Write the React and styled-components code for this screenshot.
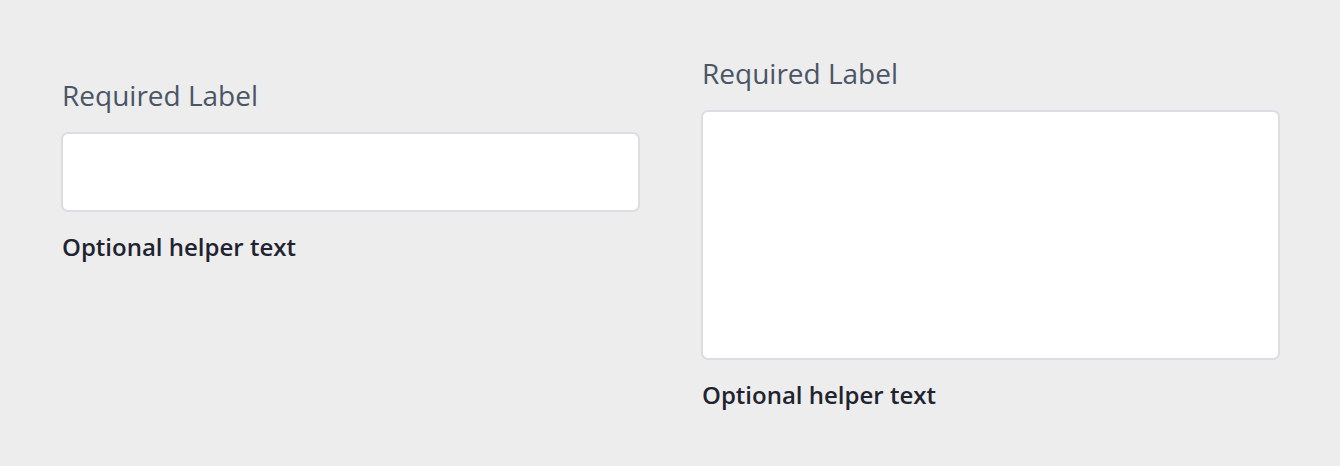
import React from "react";
import styled, { createGlobalStyle } from "styled-components";

const Global = createGlobalStyle`
  html, body { margin: 0; padding: 0; background: #ededed; }
  body { font-family: "Open Sans", "Noto Sans", sans-serif; }
  * { box-sizing: border-box; }
`;

const Page = styled.div`
  display: flex;
  align-items: flex-start;
  gap: 61px;
  padding: 55px 60px 0 61px;
  min-height: 466px;
`;

const Field = styled.div`
  flex: 0 0 579px;
  display: flex;
  flex-direction: column;
  margin-top: ${(p) => p.$offset || 0}px;
`;

const Label = styled.label`
  font-size: 28px;
  line-height: 37px;
  font-weight: 400;
  color: #4a5565;
  margin: 0 0 18px 1px;
`;

const Box = styled.div`
  height: ${(p) => p.$height}px;
  background: #ffffff;
  border: 2px solid #dcdde4;
  border-radius: 7px;
`;

const Helper = styled.div`
  font-size: 24px;
  line-height: 32px;
  font-weight: 600;
  color: #1f2430;
  margin: 19px 0 0 1px;
`;

export default function App() {
  return (
    <>
      <Global />
      <Page>
        <Field $offset={22}>
          <Label>Required Label</Label>
          <Box $height={80} />
          <Helper>Optional helper text</Helper>
        </Field>
        <Field>
          <Label>Required Label</Label>
          <Box $height={250} />
          <Helper>Optional helper text</Helper>
        </Field>
      </Page>
    </>
  );
}
